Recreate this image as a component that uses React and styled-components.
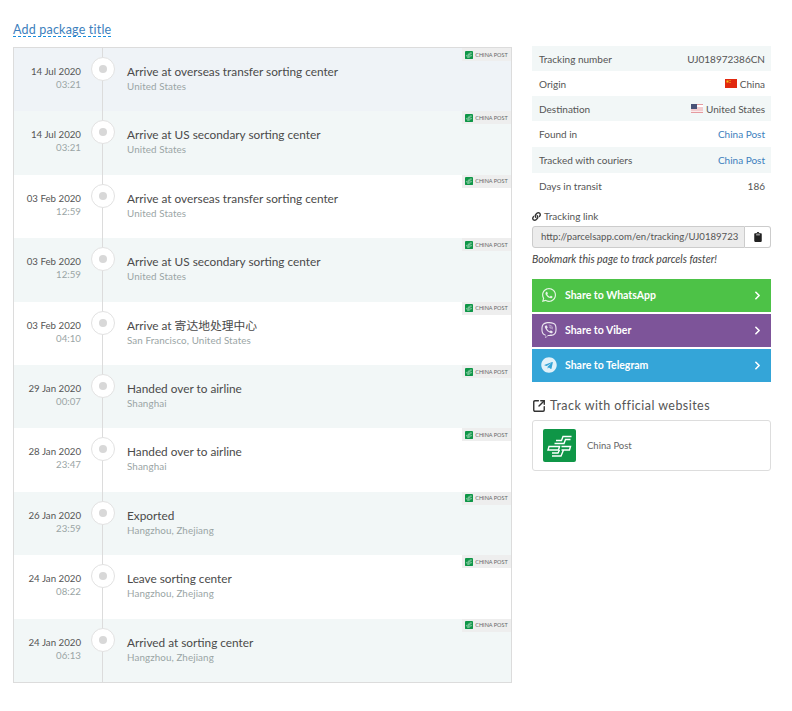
import styled, { createGlobalStyle } from "styled-components";
import { FaWhatsapp, FaViber, FaTelegram, FaLink, FaClipboard } from "react-icons/fa";
import { ChevronRight, SquareArrowOutUpRight } from "lucide-react";

const events = [
  { date: "14 Jul 2020", time: "03:21", title: "Arrive at overseas transfer sorting center", place: "United States", tone: "first" },
  { date: "14 Jul 2020", time: "03:21", title: "Arrive at US secondary sorting center", place: "United States", tone: "tint" },
  { date: "03 Feb 2020", time: "12:59", title: "Arrive at overseas transfer sorting center", place: "United States" },
  { date: "03 Feb 2020", time: "12:59", title: "Arrive at US secondary sorting center", place: "United States", tone: "tint" },
  { date: "03 Feb 2020", time: "04:10", title: "Arrive at 寄达地处理中心", place: "San Francisco, United States" },
  { date: "29 Jan 2020", time: "00:07", title: "Handed over to airline", place: "Shanghai", tone: "tint" },
  { date: "28 Jan 2020", time: "23:47", title: "Handed over to airline", place: "Shanghai" },
  { date: "26 Jan 2020", time: "23:59", title: "Exported", place: "Hangzhou, Zhejiang", tone: "tint" },
  { date: "24 Jan 2020", time: "08:22", title: "Leave sorting center", place: "Hangzhou, Zhejiang" },
  { date: "24 Jan 2020", time: "06:13", title: "Arrived at sorting center", place: "Hangzhou, Zhejiang", tone: "tint" },
];

const ChinaPostMark = ({ size }) => (
  <svg width={size} height={size} viewBox="0 0 33 33">
    <rect width="33" height="33" rx="2" fill="#0f9647" />
    <g fill="none" stroke="#fff" strokeWidth="1.4">
      <path d="M13 11.500h5.500l1.500-4h8.500M11.500 14.500h9.500l1.500-4h5" />
      <path d="M6 17.500h10.500l-1 3.500H5zM18.500 17.500h9l-1 3.500h-8" />
      <path d="M9 24h6l1.500-3M9 27h9l2.500-6" />
    </g>
  </svg>
);

const ChinaFlag = () => (
  <svg width="12" height="9" viewBox="0 0 12 9">
    <rect width="12" height="9" fill="#e1290f" />
    <rect x="1.500" y="1.500" width="2" height="2" fill="#f5c518" />
    <rect x="4.500" y="1" width="1" height="1" fill="#f5c518" />
    <rect x="4.500" y="3" width="1" height="1" fill="#f5c518" />
  </svg>
);

const UsFlag = () => (
  <svg width="12" height="9" viewBox="0 0 12 9">
    <rect width="12" height="9" fill="#fff" />
    <rect y="0" width="12" height="1" fill="#e59a9f" />
    <rect y="3.500" width="12" height="1" fill="#e59a9f" />
    <rect y="5.500" width="12" height="1" fill="#e59a9f" />
    <rect y="7.800" width="12" height="1.200" fill="#e59a9f" />
    <rect width="6" height="5" fill="#4a5378" />
  </svg>
);

export default function App() {
  return (
    <>
      <GlobalStyle />
      <Page>
        <Title>Add package title</Title>
        <Columns>
          <Timeline>
            {events.map((e, i) => (
              <EventRow key={i} tone={e.tone}>
                <DateBox>
                  <div className="date">{e.date}</div>
                  <div className="time">{e.time}</div>
                </DateBox>
                <Track>
                  <Dot />
                </Track>
                <EventText>
                  <div className="title">{e.title}</div>
                  <div className="place">{e.place}</div>
                </EventText>
                <CourierBadge>
                  <ChinaPostMark size={8} />
                  China Post
                </CourierBadge>
              </EventRow>
            ))}
          </Timeline>
          <Side>
            <InfoTable>
              <InfoRow tint>
                <span>Tracking number</span>
                <span>UJ018972386CN</span>
              </InfoRow>
              <InfoRow>
                <span>Origin</span>
                <FlagValue>
                  <ChinaFlag />
                  China
                </FlagValue>
              </InfoRow>
              <InfoRow tint>
                <span>Destination</span>
                <FlagValue>
                  <UsFlag />
                  United States
                </FlagValue>
              </InfoRow>
              <InfoRow tall>
                <span>Found in</span>
                <CourierLink>China Post</CourierLink>
              </InfoRow>
              <InfoRow tall tint>
                <span>Tracked with couriers</span>
                <CourierLink>China Post</CourierLink>
              </InfoRow>
              <InfoRow tall>
                <span>Days in transit</span>
                <span>186</span>
              </InfoRow>
            </InfoTable>

            <LinkLabel>
              <FaLink size={9} color="#333" />
              Tracking link
            </LinkLabel>
            <LinkGroup>
              <LinkField>http://parcelsapp.com/en/tracking/UJ0189723</LinkField>
              <CopyButton>
                <FaClipboard size={10} color="#222" />
              </CopyButton>
            </LinkGroup>
            <Hint>Bookmark this page to track parcels faster!</Hint>

            <ShareList>
              <ShareButton color="#4dc247">
                <ShareIcon>
                  <FaWhatsapp size={16} />
                </ShareIcon>
                <span>Share to WhatsApp</span>
                <ChevronRight size={13} strokeWidth={3} />
              </ShareButton>
              <ShareButton color="#7d5499">
                <ShareIcon>
                  <FaViber size={16} />
                </ShareIcon>
                <span>Share to Viber</span>
                <ChevronRight size={13} strokeWidth={3} />
              </ShareButton>
              <ShareButton color="#34a5d8">
                <ShareIcon>
                  <FaTelegram size={16} />
                </ShareIcon>
                <span>Share to Telegram</span>
                <ChevronRight size={13} strokeWidth={3} />
              </ShareButton>
            </ShareList>

            <OfficialTitle>
              <SquareArrowOutUpRight size={14} strokeWidth={2.4} color="#333" />
              Track with official websites
            </OfficialTitle>
            <OfficialCard>
              <ChinaPostMark size={33} />
              <span>China Post</span>
            </OfficialCard>
          </Side>
        </Columns>
      </Page>
    </>
  );
}

const GlobalStyle = createGlobalStyle`
  html, body {
    margin: 0;
    background: #fff;
  }
  body {
    font-family: "Lato", "Noto Sans CJK SC", sans-serif;
    color: #444;
  }
`;

const Page = styled.div`
  padding: 18px 21px 0 13px;
  box-sizing: border-box;
  width: 792px;
  height: 711px;
`;

const Title = styled.span`
  display: inline-block;
  height: 16px;
  line-height: 20px;
  font-size: 12.500px;
  letter-spacing: 0.2px;
  color: #3d7fbd;
  border-bottom: 1px dashed #1b8fdf;
`;

const Columns = styled.div`
  display: flex;
  gap: 20px;
  margin-top: 10px;
  align-items: flex-start;
`;

const Timeline = styled.div`
  width: 499px;
  height: 636px;
  box-sizing: border-box;
  border: 1px solid #dcdcdc;
  display: grid;
  grid-auto-rows: 1fr;
`;

const EventRow = styled.div`
  position: relative;
  display: flex;
  background: ${(p) => (p.tone === "first" ? "#eff3f7" : p.tone === "tint" ? "#f2f7f7" : "#fff")};
`;

const DateBox = styled.div`
  width: 67px;
  flex-shrink: 0;
  padding-top: 17px;
  text-align: right;
  font-size: 9.700px;
  line-height: 13px;
  .date {
    color: #555;
  }
  .time {
    color: #9aa5a5;
  }
`;

const Track = styled.div`
  width: 24px;
  margin-left: 10px;
  flex-shrink: 0;
  position: relative;
  padding-top: 9px;
  &::before {
    content: "";
    position: absolute;
    top: 0;
    bottom: 0;
    left: 11px;
    width: 1px;
    background: #dcdcdc;
  }
`;

const Dot = styled.div`
  position: relative;
  width: 24px;
  height: 24px;
  box-sizing: border-box;
  border: 1px solid #e2e2e2;
  border-radius: 50%;
  background: #fff;
  &::after {
    content: "";
    position: absolute;
    left: 7px;
    top: 7px;
    width: 8px;
    height: 8px;
    border-radius: 50%;
    background: #d8d8d8;
  }
`;

const EventText = styled.div`
  margin-left: 12px;
  padding-top: 16px;
  .title {
    font-size: 11.800px;
    line-height: 16px;
    color: #4a4a4a;
  }
  .place {
    font-size: 9.800px;
    line-height: 13px;
    letter-spacing: 0.1px;
    color: #9aa5a5;
  }
`;

const CourierBadge = styled.div`
  position: absolute;
  top: 0;
  right: 0;
  width: 49px;
  height: 13px;
  background: #eee;
  display: flex;
  align-items: center;
  justify-content: center;
  gap: 2px;
  font-size: 5.500px;
  text-transform: uppercase;
  color: #666;
`;

const Side = styled.div`
  width: 239px;
  margin-top: -1px;
`;

const InfoTable = styled.div`
  display: flex;
  flex-direction: column;
  font-size: 10px;
  color: #555;
`;

const InfoRow = styled.div`
  display: flex;
  justify-content: space-between;
  align-items: center;
  height: ${(p) => (p.tall ? "26px" : "25px")};
  padding: 0 6px 0 7px;
  background: ${(p) => (p.tint ? "#f2f7f7" : "#fff")};
`;

const FlagValue = styled.span`
  display: inline-flex;
  align-items: center;
  gap: 3px;
`;

const CourierLink = styled.span`
  color: #3d7fbd;
`;

const LinkLabel = styled.div`
  display: flex;
  align-items: center;
  gap: 3px;
  margin-top: 11px;
  font-size: 10px;
  line-height: 13px;
  color: #555;
`;

const LinkGroup = styled.div`
  display: flex;
  margin-top: 3px;
  height: 22px;
`;

const LinkField = styled.div`
  flex: 1;
  box-sizing: border-box;
  background: #ececec;
  border: 1px solid #ccc;
  border-radius: 3px 0 0 3px;
  padding-left: 8px;
  font-size: 9.600px;
  line-height: 20px;
  color: #555;
  white-space: nowrap;
  overflow: hidden;
`;

const CopyButton = styled.div`
  width: 26px;
  box-sizing: border-box;
  border: 1px solid #ccc;
  border-left: 0;
  border-radius: 0 3px 3px 0;
  display: flex;
  align-items: center;
  justify-content: center;
`;

const Hint = styled.div`
  margin-top: 5px;
  font-size: 10.500px;
  line-height: 13px;
  font-style: italic;
  color: #444;
`;

const ShareList = styled.div`
  display: flex;
  flex-direction: column;
  gap: 2px;
  margin-top: 13px;
`;

const ShareButton = styled.div`
  display: flex;
  align-items: center;
  height: 33px;
  padding: 0 7px 1px 9px;
  box-sizing: border-box;
  background: ${(p) => p.color};
  color: #fff;
  font-size: 10.500px;
  font-weight: 700;
  span {
    flex: 1;
  }
`;

const ShareIcon = styled.div`
  width: 24px;
  display: flex;
  opacity: 0.85;
`;

const OfficialTitle = styled.div`
  display: flex;
  align-items: center;
  gap: 4px;
  margin-top: 16px;
  font-size: 12.500px;
  line-height: 15px;
  letter-spacing: 0.45px;
  color: #555;
`;

const OfficialCard = styled.div`
  display: flex;
  align-items: center;
  gap: 11px;
  margin-top: 7px;
  height: 51px;
  box-sizing: border-box;
  padding-left: 10px;
  border: 1px solid #ddd;
  border-radius: 3px;
  font-size: 9.500px;
  color: #666;
`;
